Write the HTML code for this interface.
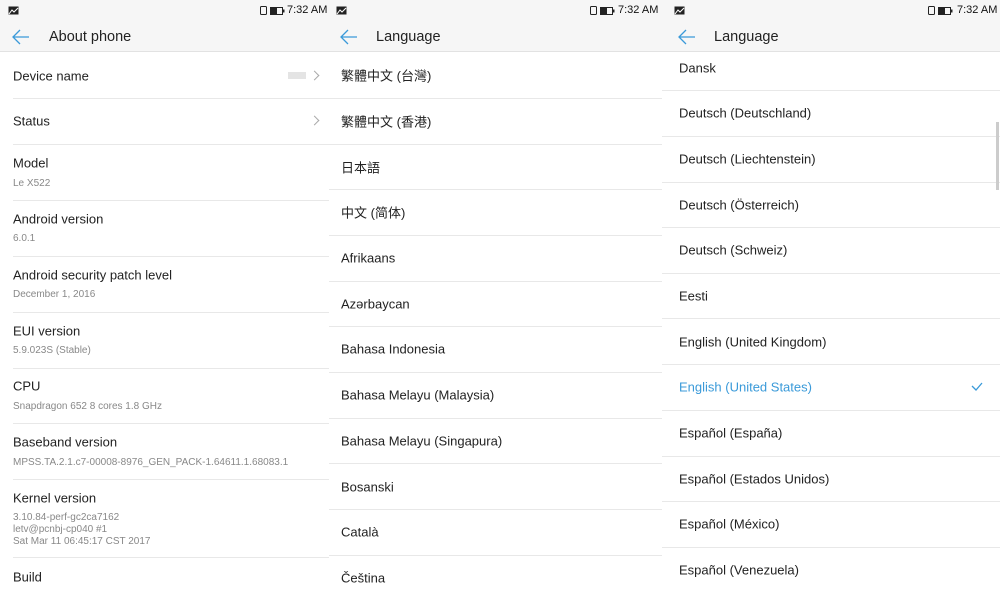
<!DOCTYPE html>
<html><head><meta charset="utf-8"><style>
*{margin:0;padding:0;box-sizing:border-box}
body{width:1000px;height:592px;overflow:hidden;background:#fff;font-family:"Liberation Sans","Noto Sans CJK SC",sans-serif;position:relative;color:#222}
.p{position:absolute;top:0;height:592px;overflow:hidden;background:#fff}
.hd{position:absolute;left:0;right:0;top:0;height:52px;background:#f6f6f6;border-bottom:1px solid #e2e2e2}
.sb{position:absolute;top:4px;font-size:11px;color:#111;white-space:nowrap}
.t{position:absolute;font-size:13px;white-space:nowrap;transform:translateY(-50%)}
.s{position:absolute;font-size:10px;color:#888;white-space:nowrap;transform:translateY(-50%);line-height:12px}
.l{position:absolute;height:1px;background:#e8e8e8}
.ttl{position:absolute;top:37px;font-size:14.5px;transform:translateY(-50%)}
.chev{position:absolute;width:7px;height:7px;border-top:1px solid #aaa;border-right:1px solid #aaa;transform:rotate(45deg)}
</style></head><body>

<!-- Panel 1 -->
<div class="p" style="left:0;width:330px">
<div class="hd"></div>
<svg style="position:absolute;left:8px;top:6px" width="11" height="9"><rect x="0.5" y="0.5" width="10" height="8" fill="#222"/><path d="M1 8 L4 4 L6 6 L10 2" stroke="#fff" fill="none"/></svg>
<svg style="position:absolute;left:260px;top:6px" width="30" height="10"><rect x="0.5" y="0.5" width="6" height="8" rx="1" fill="none" stroke="#222"/><rect x="10.5" y="1.5" width="12" height="7" fill="none" stroke="#222"/><rect x="11" y="2" width="6" height="6" fill="#222"/><rect x="23" y="3.5" width="1.5" height="3" fill="#222"/></svg>
<div class="sb" style="left:287px">7:32 AM</div>
<svg style="position:absolute;left:12px;top:29px" width="18" height="16"><path d="M17 8H1M8 1L1 8L8 15" stroke="#3a9ad9" stroke-width="1.3" fill="none"/></svg>
<div class="ttl" style="left:49px">About phone</div>
<div class="t" style="left:13px;top:76px">Device name</div>
<div style="position:absolute;left:288px;top:72px;width:18px;height:7px;background:#e4e4e4"></div>
<div class="chev" style="left:311px;top:72px"></div>
<div class="l" style="left:13px;right:0;top:98px"></div>
<div class="t" style="left:13px;top:121px">Status</div>
<div class="chev" style="left:311px;top:117px"></div>
<div class="l" style="left:13px;right:0;top:144px"></div>
<div class="t" style="left:13px;top:163px">Model</div><div class="s" style="left:13px;top:184px">Le X522</div>
<div class="l" style="left:13px;right:0;top:200px"></div>
<div class="t" style="left:13px;top:219px">Android version</div><div class="s" style="left:13px;top:239px">6.0.1</div>
<div class="l" style="left:13px;right:0;top:256px"></div>
<div class="t" style="left:13px;top:275px">Android security patch level</div><div class="s" style="left:13px;top:295px">December 1, 2016</div>
<div class="l" style="left:13px;right:0;top:312px"></div>
<div class="t" style="left:13px;top:331px">EUI version</div><div class="s" style="left:13px;top:351px">5.9.023S (Stable)</div>
<div class="l" style="left:13px;right:0;top:368px"></div>
<div class="t" style="left:13px;top:386px">CPU</div><div class="s" style="left:13px;top:407px">Snapdragon 652 8 cores 1.8 GHz</div>
<div class="l" style="left:13px;right:0;top:423px"></div>
<div class="t" style="left:13px;top:442px">Baseband version</div><div class="s" style="left:13px;top:463px">MPSS.TA.2.1.c7-00008-8976_GEN_PACK-1.64611.1.68083.1</div>
<div class="l" style="left:13px;right:0;top:479px"></div>
<div class="t" style="left:13px;top:498px">Kernel version</div>
<div class="s" style="left:13px;top:530px;">3.10.84-perf-gc2ca7162<br>letv@pcnbj-cp040 #1<br>Sat Mar 11 06:45:17 CST 2017</div>
<div class="l" style="left:13px;right:0;top:557px"></div>
<div class="t" style="left:13px;top:577px">Build</div>
</div>

<!-- Panel 2 -->
<div class="p" style="left:329px;width:333px">
<div class="hd"></div>
<svg style="position:absolute;left:7px;top:6px" width="11" height="9"><rect x="0.5" y="0.5" width="10" height="8" fill="#222"/><path d="M1 8 L4 4 L6 6 L10 2" stroke="#fff" fill="none"/></svg>
<svg style="position:absolute;left:261px;top:6px" width="30" height="10"><rect x="0.5" y="0.5" width="6" height="8" rx="1" fill="none" stroke="#222"/><rect x="10.5" y="1.5" width="12" height="7" fill="none" stroke="#222"/><rect x="11" y="2" width="6" height="6" fill="#222"/><rect x="23" y="3.5" width="1.5" height="3" fill="#222"/></svg>
<div class="sb" style="left:289px">7:32 AM</div>
<svg style="position:absolute;left:11px;top:29px" width="18" height="16"><path d="M17 8H1M8 1L1 8L8 15" stroke="#3a9ad9" stroke-width="1.3" fill="none"/></svg>
<div class="ttl" style="left:47px">Language</div>
<div class="t" style="left:12px;top:75px">繁體中文 (台灣)</div><div class="l" style="left:0;right:0;top:98px"></div>
<div class="t" style="left:12px;top:121px">繁體中文 (香港)</div><div class="l" style="left:0;right:0;top:144px"></div>
<div class="t" style="left:12px;top:167px">日本語</div><div class="l" style="left:0;right:0;top:189px"></div>
<div class="t" style="left:12px;top:212px">中文 (简体)</div><div class="l" style="left:0;right:0;top:235px"></div>
<div class="t" style="left:12px;top:258px">Afrikaans</div><div class="l" style="left:0;right:0;top:281px"></div>
<div class="t" style="left:12px;top:304px">Azərbaycan</div><div class="l" style="left:0;right:0;top:326px"></div>
<div class="t" style="left:12px;top:349px">Bahasa Indonesia</div><div class="l" style="left:0;right:0;top:372px"></div>
<div class="t" style="left:12px;top:395px">Bahasa Melayu (Malaysia)</div><div class="l" style="left:0;right:0;top:418px"></div>
<div class="t" style="left:12px;top:441px">Bahasa Melayu (Singapura)</div><div class="l" style="left:0;right:0;top:463px"></div>
<div class="t" style="left:12px;top:487px">Bosanski</div><div class="l" style="left:0;right:0;top:509px"></div>
<div class="t" style="left:12px;top:532px">Català</div><div class="l" style="left:0;right:0;top:555px"></div>
<div class="t" style="left:12px;top:578px">Čeština</div>
</div>

<!-- Panel 3 -->
<div class="p" style="left:662px;width:338px">
<div class="hd"></div>
<svg style="position:absolute;left:12px;top:6px" width="11" height="9"><rect x="0.5" y="0.5" width="10" height="8" fill="#222"/><path d="M1 8 L4 4 L6 6 L10 2" stroke="#fff" fill="none"/></svg>
<svg style="position:absolute;left:266px;top:6px" width="30" height="10"><rect x="0.5" y="0.5" width="6" height="8" rx="1" fill="none" stroke="#222"/><rect x="10.5" y="1.5" width="12" height="7" fill="none" stroke="#222"/><rect x="11" y="2" width="6" height="6" fill="#222"/><rect x="23" y="3.5" width="1.5" height="3" fill="#222"/></svg>
<div class="sb" style="left:295px">7:32 AM</div>
<svg style="position:absolute;left:16px;top:29px" width="18" height="16"><path d="M17 8H1M8 1L1 8L8 15" stroke="#3a9ad9" stroke-width="1.3" fill="none"/></svg>
<div class="ttl" style="left:52px">Language</div>
<div class="t" style="left:17px;top:68px">Dansk</div><div class="l" style="left:0;right:0;top:90px"></div>
<div class="t" style="left:17px;top:113px">Deutsch (Deutschland)</div><div class="l" style="left:0;right:0;top:136px"></div>
<div class="t" style="left:17px;top:159px">Deutsch (Liechtenstein)</div><div class="l" style="left:0;right:0;top:182px"></div>
<div class="t" style="left:17px;top:205px">Deutsch (Österreich)</div><div class="l" style="left:0;right:0;top:227px"></div>
<div class="t" style="left:17px;top:250px">Deutsch (Schweiz)</div><div class="l" style="left:0;right:0;top:273px"></div>
<div class="t" style="left:17px;top:296px">Eesti</div><div class="l" style="left:0;right:0;top:318px"></div>
<div class="t" style="left:17px;top:342px">English (United Kingdom)</div><div class="l" style="left:0;right:0;top:364px"></div>
<div class="t" style="left:17px;top:387px;color:#3a9ad9">English (United States)</div>
<svg style="position:absolute;left:309px;top:382px" width="12" height="9"><path d="M1 4L5 8L11 1" stroke="#3a9ad9" stroke-width="1.3" fill="none"/></svg>
<div class="l" style="left:0;right:0;top:410px"></div>
<div class="t" style="left:17px;top:433px">Español (España)</div><div class="l" style="left:0;right:0;top:456px"></div>
<div class="t" style="left:17px;top:479px">Español (Estados Unidos)</div><div class="l" style="left:0;right:0;top:501px"></div>
<div class="t" style="left:17px;top:524px">Español (México)</div><div class="l" style="left:0;right:0;top:547px"></div>
<div class="t" style="left:17px;top:570px">Español (Venezuela)</div>
<div style="position:absolute;left:334px;top:122px;width:3px;height:68px;background:#ccc"></div>
</div>
</body></html>
